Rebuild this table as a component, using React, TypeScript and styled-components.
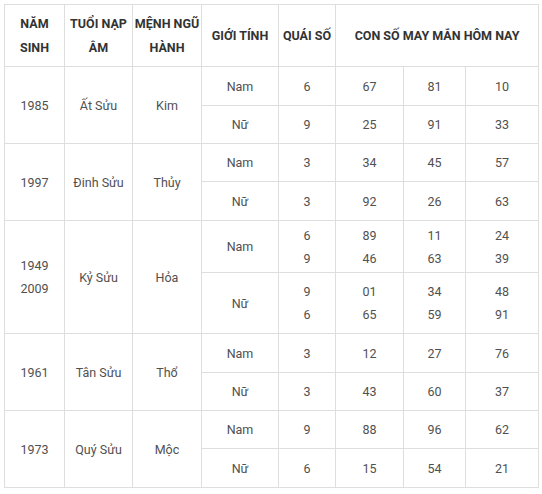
import React from "react"
import styled, { createGlobalStyle } from "styled-components"

const GlobalStyle = createGlobalStyle`
  body {
    margin: 0;
    padding: 4px;
    background: #ffffff;
    font-family: Roboto, "Liberation Sans", Arial, sans-serif;
  }
`

const Table = styled.table`
  border-collapse: collapse;
  table-layout: fixed;
  width: 535px;
  font-size: 12.5px;
  color: #505050;
`

const Col = styled.col<{ w: number }>`
  width: ${p => p.w}px;
`

const Th = styled.th`
  border: 1px solid #dedede;
  font-weight: 700;
  color: #333;
  line-height: 24px;
  text-transform: uppercase;
  text-align: center;
  padding: 0;
`

const Td = styled.td`
  border: 1px solid #dedede;
  text-align: center;
  line-height: 23px;
  padding: 0;
`

const Row = styled.tr<{ h: number }>`
  height: ${p => p.h}px;
`

const Line = styled.div`
  display: block;
`

interface Gender {
  label: string
  quai: string[]
  nums: string[][]
  h: number
}

interface Group {
  years: string[]
  tuoi: string
  menh: string
  rows: Gender[]
}

const colWidths = [60, 68, 69, 77, 57, 68, 62, 73]

const groups: Group[] = [
  {
    years: ["1985"],
    tuoi: "Ất Sửu",
    menh: "Kim",
    rows: [
      { label: "Nam", quai: ["6"], nums: [["67"], ["81"], ["10"]], h: 39 },
      { label: "Nữ", quai: ["9"], nums: [["25"], ["91"], ["33"]], h: 38 },
    ],
  },
  {
    years: ["1997"],
    tuoi: "Đinh Sửu",
    menh: "Thủy",
    rows: [
      { label: "Nam", quai: ["3"], nums: [["34"], ["45"], ["57"]], h: 38 },
      { label: "Nữ", quai: ["3"], nums: [["92"], ["26"], ["63"]], h: 39 },
    ],
  },
  {
    years: ["1949", "2009"],
    tuoi: "Kỷ Sửu",
    menh: "Hỏa",
    rows: [
      { label: "Nam", quai: ["6", "9"], nums: [["89", "46"], ["11", "63"], ["24", "39"]], h: 52 },
      { label: "Nữ", quai: ["9", "6"], nums: [["01", "65"], ["34", "59"], ["48", "91"]], h: 61 },
    ],
  },
  {
    years: ["1961"],
    tuoi: "Tân Sửu",
    menh: "Thổ",
    rows: [
      { label: "Nam", quai: ["3"], nums: [["12"], ["27"], ["76"]], h: 39 },
      { label: "Nữ", quai: ["3"], nums: [["43"], ["60"], ["37"]], h: 38 },
    ],
  },
  {
    years: ["1973"],
    tuoi: "Quý Sửu",
    menh: "Mộc",
    rows: [
      { label: "Nam", quai: ["9"], nums: [["88"], ["96"], ["62"]], h: 38 },
      { label: "Nữ", quai: ["6"], nums: [["15"], ["54"], ["21"]], h: 39 },
    ],
  },
]

const Lines = ({ items }: { items: string[] }) => (
  <>
    {items.map((t, i) => (
      <Line key={i}>{t}</Line>
    ))}
  </>
)

const App = () => (
  <>
    <GlobalStyle />
    <Table>
      <colgroup>
        {colWidths.map((w, i) => (
          <Col key={i} w={w} />
        ))}
      </colgroup>
      <thead>
        <Row h={62}>
          <Th>Năm<br />sinh</Th>
          <Th>Tuổi nạp<br />âm</Th>
          <Th>Mệnh ngũ<br />hành</Th>
          <Th>Giới tính</Th>
          <Th>Quái số</Th>
          <Th colSpan={3}>Con số may mắn hôm nay</Th>
        </Row>
      </thead>
      <tbody>
        {groups.map(g =>
          g.rows.map((r, i) => (
            <Row h={r.h} key={g.tuoi + r.label}>
              {i === 0 && (
                <>
                  <Td rowSpan={2}>
                    <Lines items={g.years} />
                  </Td>
                  <Td rowSpan={2}>{g.tuoi}</Td>
                  <Td rowSpan={2}>{g.menh}</Td>
                </>
              )}
              <Td>{r.label}</Td>
              <Td>
                <Lines items={r.quai} />
              </Td>
              {r.nums.map((n, j) => (
                <Td key={j}>
                  <Lines items={n} />
                </Td>
              ))}
            </Row>
          ))
        )}
      </tbody>
    </Table>
  </>
)

export default App
